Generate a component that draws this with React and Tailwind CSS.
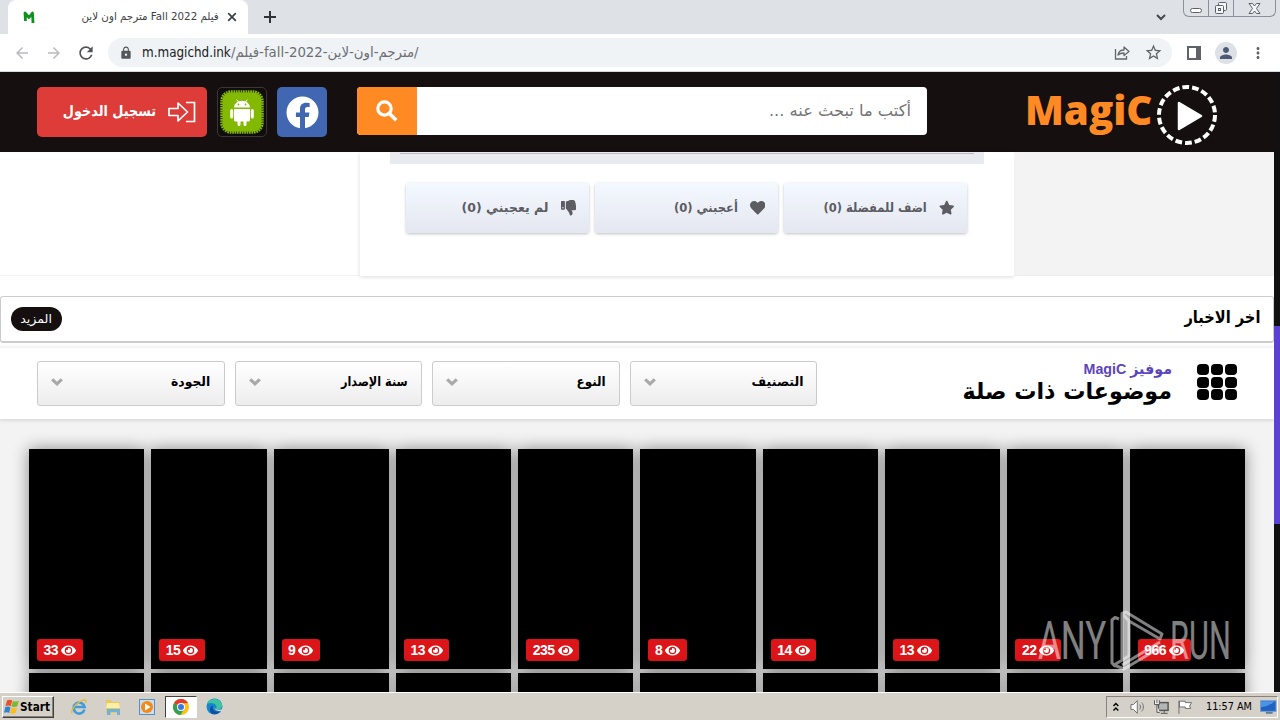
import { FaEye, FaFacebook, FaHeart, FaStar, FaThumbsDown } from "react-icons/fa"
import {
  MdArrowBack,
  MdArrowForward,
  MdLock,
  MdMoreVert,
  MdPerson,
  MdRefresh,
  MdStarBorder,
} from "react-icons/md"

const views = [33, 15, 9, 13, 235, 8, 14, 13, 22, 966]
const filters = [
  { label: "الجودة", scale: "scale-x-[0.95]" },
  { label: "سنة الإصدار", scale: "scale-x-[0.87]" },
  { label: "النوع", scale: "scale-x-[0.92]" },
  { label: "التصنيف", scale: "scale-x-[0.97]" },
]

export default function App() {
  return (
    <div className="relative flex h-[720px] w-[1280px] flex-col overflow-hidden bg-white font-['DejaVu_Sans',sans-serif]">
      <TabStrip />
      <Toolbar />
      <div className="flex h-[620px]">
        <div className="flex w-[1274px] flex-col overflow-hidden">
          <SiteHeader />
          <PlayerRow />
          <NewsBar />
          <FilterBar />
          <MovieGrid />
        </div>
        <div className="h-full w-[6px] bg-[#111] pt-[254px]">
          <div className="h-[198px] bg-[#5b40d4]" />
        </div>
      </div>
      <Taskbar />
      <Watermark />
    </div>
  )
}

const TabStrip = () => (
  <div className="flex h-[34px] shrink-0 bg-[#dee1e6] pl-2">
    <div className="flex h-full w-[240px] items-center rounded-t-lg bg-white pr-[11px] pl-[14px]">
      <svg className="size-3.5 shrink-0" viewBox="0 0 14 14" fill="none" stroke="#11901f" strokeWidth="2.8">
        <path d="M3.500 11 3 3l4 4.500L10.500 3l.5 10" strokeLinejoin="round" />
      </svg>
      <div dir="rtl" className="ml-auto origin-right scale-x-[0.935] text-[11px] whitespace-nowrap text-[#3c4043]">
        فيلم Fall 2022 مترجم اون لاين
      </div>
      <svg className="ml-2 size-2.5 shrink-0" viewBox="0 0 10 10" stroke="#3c4043" strokeWidth="1.700">
        <path d="m1.200 1.200 7.600 7.600M8.800 1.200 1.200 8.800" />
      </svg>
    </div>
    <svg className="mt-[11px] ml-4 size-3" viewBox="0 0 12 12" stroke="#303438" strokeWidth="2">
      <path d="M6 0v12M0 6h12" />
    </svg>
    <svg className="mt-[14px] ml-auto h-[7px] w-2.5" viewBox="0 0 10 7" fill="none" stroke="#45484d" strokeWidth="2">
      <path d="m1 1 4 4 4-4" />
    </svg>
    <div className="mr-1 ml-[17px] flex h-[17px] w-[93px] rounded-b-md border border-t-0 border-[#8b8f98]">
      <div className="flex w-[25px] items-end justify-center border-r border-[#8b8f98] pb-[3px]">
        <div className="h-[5px] w-3 rounded-sm border border-[#5b606a] bg-white" />
      </div>
      <div className="flex w-[25px] items-center justify-center border-r border-[#8b8f98]">
        <svg className="size-[14px]" viewBox="0 0 14 14" fill="#f4f5f7" stroke="#5b606a">
          <rect x="4.500" y="1.500" width="8" height="8" rx="1" />
          <rect x="1.500" y="4.500" width="8" height="8" rx="1" />
          <rect x="4.500" y="7.500" width="2" height="2" />
        </svg>
      </div>
      <div className="flex flex-1 items-center justify-center">
        <svg className="h-[11px] w-[13px]" viewBox="0 0 13 11" fill="#f4f5f7" stroke="#5b606a">
          <path d="M1 .5h3.500l2 2.500 2-2.500H12L8.500 5.500l3.500 5H8.500l-2-2.500-2 2.500H1l3.500-5z" />
        </svg>
      </div>
    </div>
  </div>
)

const Toolbar = () => (
  <div className="flex h-[38px] shrink-0 items-center border-b border-[#d5d8dc] bg-white pl-[13px]">
    <MdArrowBack className="size-[18px] text-[#b9bbbe]" />
    <MdArrowForward className="ml-[14px] size-[18px] text-[#b9bbbe]" />
    <MdRefresh className="ml-[13px] size-5 text-[#505357]" />
    <div className="ml-[12px] flex h-[29px] w-[1064px] items-center rounded-full bg-[#f0f3f5] pr-[9px] pl-[11px]">
      <MdLock className="size-[14px] text-[#54575c]" />
      <div className="ml-[9px] flex text-[14px] whitespace-nowrap">
        <span className="w-[89px] origin-left scale-x-[0.855] text-[#202124]">m.magichd.ink</span>
        <span className="origin-left scale-x-[0.95] text-[#6b6f74]">/فيلم-fall-2022-مترجم-اون-لاين/</span>
      </div>
      <svg
        className="ml-auto h-[15px] w-4"
        viewBox="0 0 16 15"
        fill="none"
        stroke="#63666b"
        strokeWidth="1.300"
      >
        <path d="M1.500 4v10h11v-3" />
        <path d="M4 10c.5-3.500 2.500-5 6-5V2l5 4.500-5 4V8C7.500 8 5.500 8.500 4 10z" strokeLinejoin="round" />
      </svg>
      <MdStarBorder className="ml-[14px] size-[19px] text-[#5f6368]" />
    </div>
    <div className="ml-[15px] h-[14px] w-[14px] border-2 border-r-[5px] border-[#5f6368]" />
    <div className="ml-[14px] flex size-[22px] items-center justify-center rounded-full bg-[#dde1e6]">
      <MdPerson className="size-[18px] text-[#4d5a75]" />
    </div>
    <MdMoreVert className="ml-3 size-[18px] text-[#5f6368]" />
  </div>
)

const AndroidBadge = () => (
  <svg className="size-[46px]" viewBox="0 0 46 46">
    <rect x="3.500" y="3.500" width="39" height="39" rx="8" fill="#83b804" />
    <rect
      x="3"
      y="3"
      width="40"
      height="40"
      rx="9"
      fill="none"
      stroke="#83b804"
      strokeWidth="3.500"
      strokeDasharray="1.700 .7"
    />
    <g fill="#fff" stroke="#fff" strokeLinecap="round">
      <path d="M15 18.500a8 6.800 0 0 1 16 0z" stroke="none" />
      <path d="m18 11 1.500 2M28 11l-1.500 2" />
      <path d="M15 20h16v11a1.500 1.500 0 0 1-1.500 1.500h-13A1.500 1.500 0 0 1 15 31z" stroke="none" />
      <path d="M12.700 21.500v6.500M33.300 21.500v6.500M20 32v3.500M26 32v3.500" strokeWidth="3" />
    </g>
    <circle cx="19.500" cy="15.500" r=".9" fill="#83b804" />
    <circle cx="26.500" cy="15.500" r=".9" fill="#83b804" />
  </svg>
)

const SiteHeader = () => (
  <div className="flex h-20 shrink-0 bg-[#15100f] pl-[37px]">
    <div className="mt-[15px] flex h-[50px] w-[170px] items-center justify-end rounded-[5px] bg-[#dd3c38] pr-[11px] text-white">
      <div dir="rtl" className="origin-right scale-x-[0.855] pb-0.5 text-[15px] font-bold whitespace-nowrap">
        تسجيل الدخول
      </div>
      <svg className="ml-3 h-[22px] w-7" viewBox="0 0 28 22" fill="none" stroke="#fff" strokeWidth="1.700">
        <path d="M1 7.500h9V2l9.500 9L10 20v-5.500H1z" strokeLinejoin="round" />
        <path d="M18 1.500h8.500v19H18" />
      </svg>
    </div>
    <div className="mt-[15px] ml-[10px] flex size-[50px] items-center justify-center rounded-[5px] border border-[#3b3737] bg-[#100d0c]">
      <AndroidBadge />
    </div>
    <div className="mt-[15px] ml-[10px] flex size-[50px] items-center justify-center rounded-[5px] bg-[#4167b2]">
      <FaFacebook className="size-[33px] text-white" />
    </div>
    <div className="mt-[15px] ml-[30px] flex h-12 w-[570px] overflow-hidden rounded-[4px] bg-white">
      <div className="flex w-[60px] items-center justify-center bg-[#ff8a24]">
        <svg className="size-[22px]" viewBox="0 0 22 22" fill="none" stroke="#fff">
          <circle cx="8.500" cy="8.500" r="6.700" strokeWidth="3.200" />
          <path d="m13.500 13.500 6.700 6.700" strokeWidth="3.600" />
        </svg>
      </div>
      <div dir="rtl" className="flex flex-1 items-center pr-4 text-[16px] text-[#757575]">
        <span className="origin-right scale-x-[1.015] whitespace-nowrap">أكتب ما تبحث عنه ...</span>
      </div>
    </div>
    <div className="ml-[98px] flex w-[127px] items-center">
      <span className="origin-left scale-x-[0.98] pb-1 font-['Open_Sans',sans-serif] text-[41px] font-extrabold text-[#ff8a24]">
        MagiC
      </span>
    </div>
    <svg className="mt-[13px] ml-[5px] size-[60px]" viewBox="0 0 60 60">
      <circle cx="30" cy="30" r="28" fill="none" stroke="#fff" strokeWidth="4" strokeDasharray="6.800 2.975" />
      <path d="M22 18v26l22-13z" fill="#fff" stroke="#fff" strokeWidth="2.500" strokeLinejoin="round" />
    </svg>
  </div>
)

const PlayerRow = () => (
  <div className="flex h-36 shrink-0">
    <div className="h-[124px] w-[360px] border-b border-[#f3f3f3]" />
    <div className="flex h-[124px] w-[654px] flex-col items-center bg-white shadow-[0_1px_4px_rgba(0,0,0,0.15)]">
      <div className="h-3 w-[594px] bg-[#e8eaf0] px-2.5">
        <div className="h-0.5 border-b border-[#b9bbc2]" />
      </div>
      <div className="mt-[19px] flex gap-1.5 pr-px">
        <VoteButton icon={<FaThumbsDown />} label="لم يعجبني (0)" scale="scale-x-[0.96]" />
        <VoteButton icon={<FaHeart />} label="أعجبني (0)" scale="scale-x-[0.89]" />
        <VoteButton icon={<FaStar />} label="اضف للمفضلة (0)" scale="scale-x-[0.885]" />
      </div>
    </div>
    <div className="h-[124px] w-[260px] border-b border-[#eee] bg-[#f3f3f3]" />
  </div>
)

const VoteButton = ({ icon, label, scale }) => (
  <div
    dir="rtl"
    className="flex h-[50px] w-[183px] items-center rounded-[3px] bg-linear-to-b from-[#f4f8ff] to-[#e4e7ef] pr-[13px] text-[#5c5c62] shadow-[0_1px_3px_rgba(0,0,0,0.25)]"
  >
    <span className="text-[15.500px]">{icon}</span>
    <span className={`mr-3 origin-right text-[13px] font-bold whitespace-nowrap ${scale}`}>{label}</span>
  </div>
)

const NewsBar = () => (
  <div className="flex h-[47px] shrink-0 items-center justify-between rounded-[3px] border border-b-2 border-[#ccc] pr-[13px] pl-2.5">
    <div className="flex h-6 w-[51px] items-center justify-center rounded-full bg-[#15100f]">
      <span className="scale-x-[1.05] text-[12px] whitespace-nowrap text-white">المزيد</span>
    </div>
    <div dir="rtl" className="origin-right scale-x-[0.86] pb-0.5 text-[17px] font-bold text-black">
      اخر الاخبار
    </div>
  </div>
)

const FilterBar = () => (
  <div className="z-10 mt-1 flex h-[72px] shrink-0 border-t border-[#f3f3f3] bg-white pl-[37px] shadow-[0_1px_4px_rgba(0,0,0,0.15)]">
    <div className="mt-[13px] flex gap-[10.050px]">
      {filters.map((filter) => (
        <div
          key={filter.label}
          className="flex h-[45px] w-[187.550px] items-center justify-between rounded-[3px] border border-[#ccc] bg-linear-to-b from-white to-[#ededed] pr-[13px] pb-[3px] pl-[13px]"
        >
          <svg className="h-2 w-3" viewBox="0 0 12 8" fill="none" stroke="#a9a9a9" strokeWidth="3.200">
            <path d="m1.200 1.300 4.800 4.500 4.800-4.500" />
          </svg>
          <span className={`origin-right text-[13px] font-bold whitespace-nowrap text-black ${filter.scale}`}>
            {filter.label}
          </span>
        </div>
      ))}
    </div>
    <div dir="rtl" className="mt-[11px] ml-auto flex w-[250px] flex-col">
      <div className="h-5 origin-right scale-x-[0.95] font-['Liberation_Sans','DejaVu_Sans',sans-serif] text-[15px] leading-5 font-bold text-[#5a45bd]">
        موفيز MagiC
      </div>
      <div className="origin-right scale-x-[0.965] text-[23px] leading-6 font-bold whitespace-nowrap text-black">
        موضوعات ذات صلة
      </div>
    </div>
    <div className="mt-4 mr-[37px] ml-[25px] grid h-9 w-10 grid-cols-3 grid-rows-3 gap-x-0.5 gap-y-[1.500px]">
      {Array.from({ length: 9 }, (_, i) => (
        <div key={i} className="rounded-[4px] bg-black" />
      ))}
    </div>
  </div>
)

const MovieGrid = () => (
  <div className="flex flex-1 flex-col gap-1 overflow-hidden bg-[#f3f3f3] px-[29px] pt-[30px]">
    <div className="flex h-[220px] shrink-0 gap-[7px]">
      {views.map((count, i) => (
        <div key={i} className="flex flex-1 items-end bg-black pb-2 pl-2 shadow-[0_0_15px_rgba(0,0,0,0.45)]">
          <div className="flex h-[22px] items-center gap-[3px] rounded-[3px] bg-[#dc1519] px-[6.500px] font-['Liberation_Sans',sans-serif] text-[14px] font-bold text-white">
            <span className="tracking-[-0.5px]">{count}</span>
            <FaEye className="size-[15px]" />
          </div>
        </div>
      ))}
    </div>
    <div className="flex h-[60px] shrink-0 gap-[7px]">
      {views.map((_, i) => (
        <div key={i} className="flex-1 bg-black shadow-[0_0_15px_rgba(0,0,0,0.45)]" />
      ))}
    </div>
  </div>
)

const Taskbar = () => (
  <div className="z-10 flex h-7 shrink-0 items-center border-t border-white bg-[#d5d0c8] pl-0.5">
    <div className="flex h-[22px] w-[52px] items-center border border-t-white border-r-[#404040] border-b-[#404040] border-l-white pl-px shadow-[inset_-1px_-1px_0_#87837c]">
      <svg className="size-4 shrink-0" viewBox="0 0 16 16">
        <path d="M3 1.500c2-1 3.500-.8 5.200.1L6.800 7.300C5.300 6.400 3.800 6.300 1.500 7.100z" fill="#e8522b" />
        <path d="M8.800 2c1.600.8 3.200.8 6-.3L13.300 7.300c-2 1-3.700 1-5.700.1z" fill="#7db72f" />
        <path d="M1.300 8c2-.8 3.500-.7 5.200.2l-1.300 5.700C3.700 13 2.200 13 0 13.800z" fill="#2f83d0" />
        <path d="M7.400 8.500c1.700.8 3.300.8 5.700-.1l-1.500 5.700c-2.100 1-3.700.9-5.600 0z" fill="#f9bd1e" />
      </svg>
      <span className="origin-left scale-x-[0.88] text-[12px] font-bold text-black">Start</span>
    </div>
    <svg className="ml-4 size-[18px]" viewBox="0 0 18 18" fill="none">
      <path d="M14.500 11.500A5.500 5.500 0 1 1 14.600 9H5" stroke="#3f9ddd" strokeWidth="2.600" />
      <path d="M2 15.500C0 12 8 3 14 2c2-.3 2.500 1 1.500 3" stroke="#e8b93a" strokeWidth="1.300" />
    </svg>
    <svg className="ml-4 size-[18px]" viewBox="0 0 18 18">
      <path d="M2 2h5l1 2h8v11H2z" fill="#e9c95c" />
      <path d="M3 5h12l1 5H2z" fill="#fbeea9" />
      <path d="M3 17v-6h13v6h-3v-3H6.500v3z" fill="#6db3dd" />
    </svg>
    <svg className="ml-4 size-[18px]" viewBox="0 0 18 18">
      <rect x="1.500" y="1.500" width="15" height="15" fill="#c8def3" stroke="#5a8fc4" />
      <circle cx="9" cy="9" r="6" fill="#f28a13" />
      <path d="M7 5.500v7L12.500 9z" fill="#fff" />
    </svg>
    <div className="ml-[9px] flex h-[22px] w-8 items-center justify-center border border-t-[#404040] border-r-white border-b-white border-l-[#404040] bg-white">
      <svg className="size-4" viewBox="0 0 16 16">
        <circle cx="8" cy="8" r="8" fill="#fbc116" />
        <path d="M8 8 1 4.100A8 8 0 0 1 15 4.100L8 4.500z" fill="#e23c2f" />
        <path d="M8 8 1.070 4A8 8 0 0 0 7.500 16l3.300-5.500z" fill="#31a350" />
        <circle cx="8" cy="8" r="4" fill="#fff" />
        <circle cx="8" cy="8" r="3" fill="#3c78e4" />
      </svg>
    </div>
    <svg className="ml-[9px] size-[17px]" viewBox="0 0 17 17">
      <circle cx="8.500" cy="8.500" r="8" fill="#1784cf" />
      <path d="M1 6C3 0 13-1 16 6c1 4-2 6-5 5-2-.5 0-1.500-.500-3C9 5 4 4 1 6z" fill="#3fc4a2" />
      <path d="M7 7.500c-1.500 4 1.500 7.500 7.500 5.500-2 3-6 4-9 2.500-2.500-3-2-7 1.500-8z" fill="#0f4f9f" />
      <path d="M9 7.500c-1.500 2.500 1.500 5 6 4l2-1v2c-5 2-10-1-8-5z" fill="#d5d0c8" />
    </svg>
    <div className="mr-0.5 ml-auto flex h-[22px] w-[172px] items-center border border-t-[#87837c] border-r-white border-b-white border-l-[#87837c] pl-[5px]">
      <svg className="h-2.5 w-2" viewBox="0 0 8 10" fill="none" stroke="#000" strokeWidth="1.500">
        <path d="M1.500 4 4 1.500 6.500 4M1.500 8.500 4 6l2.500 2.500" />
      </svg>
      <svg className="ml-2.5 size-4" viewBox="0 0 16 16" fill="#fff" stroke="#6e6e6e">
        <path d="M1 5.500h2.500l4-4v13l-4-4H1z" />
        <path d="M10 5.500c1 1.500 1 3.500 0 5M12 3.500c2.300 2.500 2.300 6.500 0 9" fill="none" />
      </svg>
      <svg className="ml-[9px] size-4" viewBox="0 0 16 16" fill="#f3f3f3" stroke="#555">
        <rect x="4.500" y="3.500" width="10" height="8" fill="#b5b5b5" strokeWidth="1.500" />
        <path d="M7 14.500h7M10.500 12v2" />
        <path d="M.5 1v4.500h5V1M3 .5V4M3 6v7.500h3" />
      </svg>
      <svg className="ml-[7px] size-4" viewBox="0 0 16 16" fill="#fff" stroke="#6e6e6e">
        <path d="M2 15V1.500M2.500 2h6v1.500H15L13 7l1 2.500H8.500V8h-6z" />
      </svg>
      <span className="mt-0.5 ml-3.5 w-[47px] origin-left scale-x-[0.88] text-[11px] whitespace-nowrap text-black">
        11:57 AM
      </span>
      <svg className="ml-[7px] h-[14px] w-[17px]" viewBox="0 0 17 14">
        <rect x=".5" y=".5" width="16" height="11" fill="#1e62c4" stroke="#7ba0cb" />
        <path d="M1 7c5 0 10-2 14-6H1z" fill="#4c93e6" />
        <path d="M6 13h7" stroke="#5d7e9e" strokeWidth="2" />
      </svg>
    </div>
  </div>
)

const Watermark = () => (
  <div className="absolute top-[609px] left-[1038px] z-20 flex h-16 w-[195px] items-center font-['Roboto',sans-serif] text-[53px] leading-none text-white opacity-50">
    <div className="w-[70px] shrink-0">
      <span className="inline-block origin-left scale-x-[0.66]">ANY</span>
    </div>
    <svg
      className="h-16 w-[62px] shrink-0"
      viewBox="0 0 62 64"
      fill="none"
      stroke="#fff"
      strokeWidth="3"
      strokeLinejoin="round"
    >
      <path d="M11 10 7 8.500 4 11v43l3.500 3.500" />
      <path d="M14 50V4.500L18 3l36 22-2 5-31-18v36" />
      <path d="m14 4.500 7 7.500" />
      <path d="M21 47 6 56l10 4 37-22M14 56l38-23" />
    </svg>
    <div className="w-[62px] shrink-0">
      <span className="inline-block origin-left scale-x-[0.58]">RUN</span>
    </div>
  </div>
)
